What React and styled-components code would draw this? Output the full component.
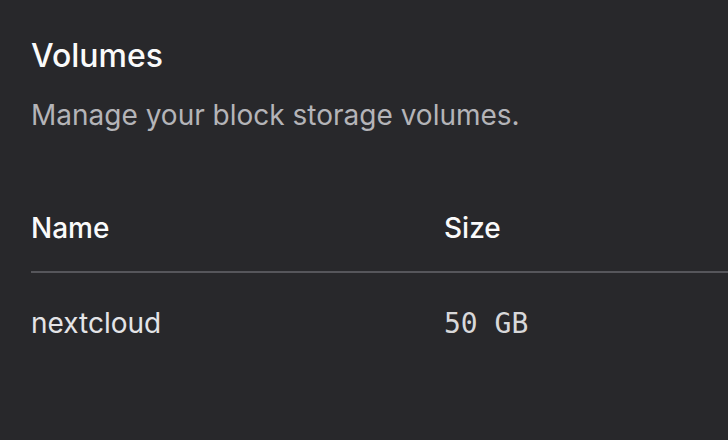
import React from "react";
import styled, { createGlobalStyle } from "styled-components";

const volumes = [{ id: 1, name: "nextcloud", size: "50 GB" }];

const GlobalStyle = createGlobalStyle`
  html, body {
    margin: 0;
    padding: 0;
    background: #28282b;
  }
  body {
    font-family: Inter, "Noto Sans", sans-serif;
  }
`;

const Page = styled.main`
  min-height: 440px;
  box-sizing: border-box;
  padding: 36px 0 0 31px;
  overflow: hidden;
  background: #28282b;
`;

const Title = styled.h1`
  margin: 0;
  font-size: 32px;
  line-height: 40px;
  font-weight: 500;
  color: #fafafa;
`;

const Subtitle = styled.p`
  margin: 21px 0 0;
  font-size: 28px;
  line-height: 36px;
  font-weight: 400;
  color: #b4b4b8;
`;

const Table = styled.table`
  margin-top: 77px;
  width: calc(100% + 40px);
  border-collapse: collapse;
`;

const HeadCell = styled.th`
  text-align: left;
  vertical-align: baseline;
  font-size: 28px;
  line-height: 36px;
  font-weight: 500;
  color: #fafafa;
  padding: 0 0 25px;
  width: ${(p) => p.$width || "auto"};
  border-bottom: 2px solid #56565b;
`;

const Cell = styled.td`
  padding: 32px 0 0;
  vertical-align: baseline;
  line-height: 36px;
  color: ${(p) => (p.$mono ? "#d8d8da" : "#e4e4e7")};
  font-family: ${(p) =>
    p.$mono ? '"DejaVu Sans Mono", monospace' : "Inter, sans-serif"};
  font-size: 28px;
`;

export default function App() {
  return (
    <>
      <GlobalStyle />
      <Page>
        <Title>Volumes</Title>
        <Subtitle>Manage your block storage volumes.</Subtitle>
        <Table>
          <thead>
            <tr>
              <HeadCell $width="413px">Name</HeadCell>
              <HeadCell>Size</HeadCell>
            </tr>
          </thead>
          <tbody>
            {volumes.map((v) => (
              <tr key={v.id}>
                <Cell>{v.name}</Cell>
                <Cell $mono>{v.size}</Cell>
              </tr>
            ))}
          </tbody>
        </Table>
      </Page>
    </>
  );
}
